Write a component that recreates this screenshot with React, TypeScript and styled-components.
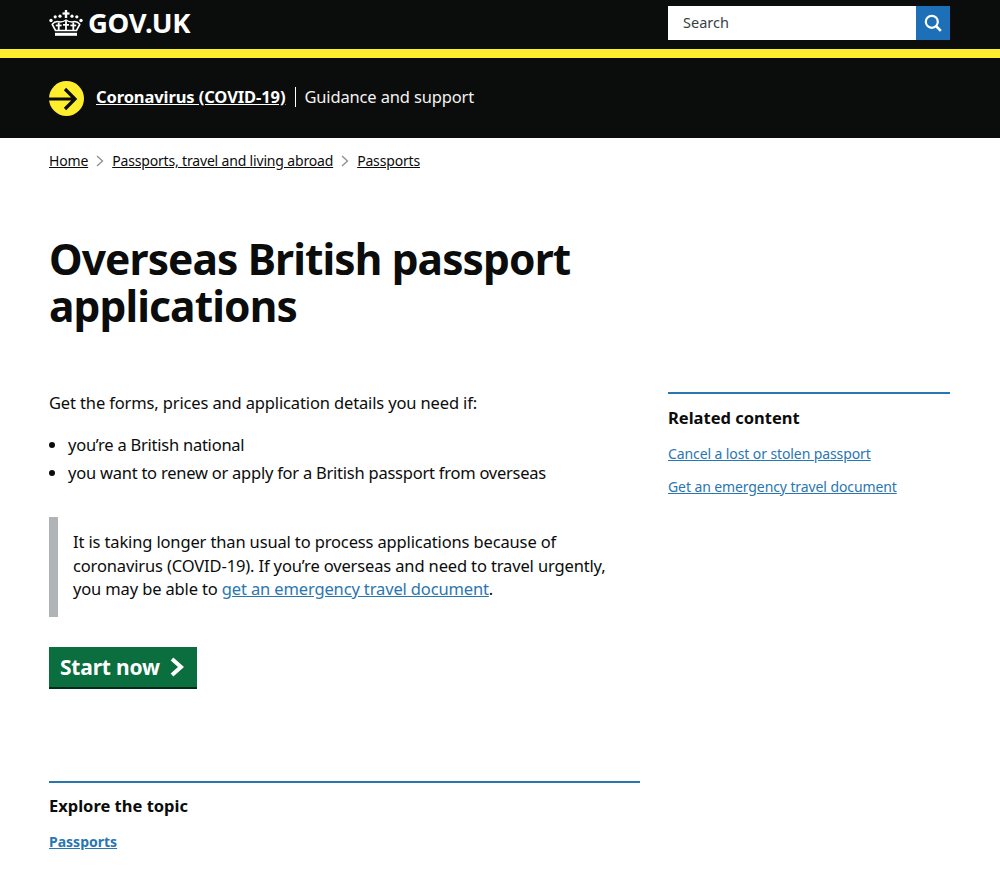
import React from "react";
import styled, { createGlobalStyle } from "styled-components";

const GlobalStyle = createGlobalStyle`
  html, body { margin: 0; padding: 0; background: #fff; }
  body {
    font-family: "Noto Sans", "Liberation Sans", Arial, sans-serif;
    color: #0b0c0c;
  }
  a { color: inherit; }
`;

const CrownIcon = () => (
  <svg width="34" height="26" viewBox="0 0 34 26" fill="#fff">
    {/* top cross */}
    <rect x="15.800" y="0" width="2.400" height="8" />
    <rect x="13.500" y="2.400" width="7" height="2.200" />
    {/* jewels */}
    <circle cx="11" cy="6.200" r="1.600" />
    <circle cx="23" cy="6.200" r="1.600" />
    <circle cx="6.200" cy="6.800" r="1.600" />
    <circle cx="27.800" cy="6.800" r="1.600" />
    <circle cx="2" cy="10.500" r="1.700" />
    <circle cx="32" cy="10.500" r="1.700" />
    {/* arches */}
    <path d="M3 14.500c2-2.500 5-3.500 8-2.500M31 14.500c-2-2.500-5-3.500-8-2.500M11 12c2 0 4-.5 6-2 2 1.500 4 2 6 2" fill="none" stroke="#fff" strokeWidth="1.400" />
    {/* inner crosses */}
    <rect x="8.800" y="12.500" width="1.800" height="7.500" />
    <rect x="16.100" y="11" width="1.800" height="9" />
    <rect x="23.400" y="12.500" width="1.800" height="7.500" />
    <rect x="6.800" y="14.600" width="5.800" height="1.700" />
    <rect x="14" y="14" width="6" height="1.700" />
    <rect x="21.400" y="14.600" width="5.800" height="1.700" />
    <path d="M3 14l3.500 6.500h21L31 14" fill="none" stroke="#fff" strokeWidth="1.600" />
    <rect x="6" y="22.800" width="22" height="3" />
  </svg>
);

const ArrowBadge = () => (
  <svg width="35" height="35" viewBox="0 0 35 35">
    <circle cx="17.500" cy="17.500" r="17.500" fill="#ffee2e" />
    <path d="M0 18h26M16 8l10 10-10 10" fill="none" stroke="#0b0c0c" strokeWidth="3.200" />
  </svg>
);

const SearchIcon = () => (
  <svg width="18" height="18" viewBox="0 0 18 18" fill="none" stroke="#fff">
    <circle cx="7.800" cy="7.800" r="6" strokeWidth="2.200" />
    <path d="M12 12l4.800 4.800" strokeWidth="2.600" />
  </svg>
);

const Chevron = () => (
  <BreadcrumbSeparator width="8" height="12" viewBox="0 0 8 12" fill="none" stroke="#8a8f92" strokeWidth="1.300">
    <path d="M1 1l5.500 5-5.500 5" />
  </BreadcrumbSeparator>
);

const App: React.FC = () => {
  return (
    <>
      <GlobalStyle />
      <TopBar>
        <Logo>
          <CrownIcon />
          <LogoText>GOV.UK</LogoText>
        </Logo>
        <SearchBox>
          <SearchField>Search</SearchField>
          <SearchButton aria-label="Search"><SearchIcon /></SearchButton>
        </SearchBox>
      </TopBar>
      <YellowStrip />
      <CovidBanner>
        <ArrowBadge />
        <CovidText>
          <CovidLink href="#">Coronavirus (COVID-19)</CovidLink>
          <CovidNote>Guidance and support</CovidNote>
        </CovidText>
      </CovidBanner>
      <Page>
        <Breadcrumbs>
          <CrumbLink href="#">Home</CrumbLink>
          <Chevron />
          <CrumbLink href="#">Passports, travel and living abroad</CrumbLink>
          <Chevron />
          <CrumbLink href="#">Passports</CrumbLink>
        </Breadcrumbs>
        <Title>Overseas British passport applications</Title>
        <Columns>
          <Main>
            <Lead>Get the forms, prices and application details you need if:</Lead>
            <Bullets>
              <Bullet>you’re a British national</Bullet>
              <Bullet>you want to renew or apply for a British passport from overseas</Bullet>
            </Bullets>
            <Inset>
              It is taking longer than usual to process applications because of coronavirus (COVID-19). If you’re overseas and need to travel urgently, you may be able to <BlueLink href="#">get an emergency travel document</BlueLink>.
            </Inset>
            <StartButton href="#">
              Start now
              <svg width="17" height="20" viewBox="0 0 17 20" fill="none" stroke="#fff" strokeWidth="4">
                <path d="M3 2l9 8-9 8" />
              </svg>
            </StartButton>
            <ExploreBlock>
              <SectionHeading>Explore the topic</SectionHeading>
              <TopicLink href="#">Passports</TopicLink>
            </ExploreBlock>
          </Main>
          <Sidebar>
            <SectionHeading>Related content</SectionHeading>
            <RelatedLink href="#">Cancel a lost or stolen passport</RelatedLink>
            <RelatedLink href="#">Get an emergency travel document</RelatedLink>
          </Sidebar>
        </Columns>
      </Page>
    </>
  );
};

export default App;

const TopBar = styled.header`
  height: 49px;
  background: #0b0c0c;
  padding: 0 50px 4px 49px;
  display: flex;
  align-items: center;
  justify-content: space-between;
  box-sizing: border-box;
`;

const Logo = styled.div`
  display: flex;
  align-items: center;
  gap: 5px;
  color: #fff;
`;

const LogoText = styled.span`
  font-size: 27.500px;
  font-weight: 700;
  line-height: 45px;
  letter-spacing: -0.3px;
`;

const SearchBox = styled.div`
  display: flex;
  width: 282px;
  height: 34px;
  margin-top: 1px;
`;

const SearchField = styled.div`
  flex: 1;
  background: #fff;
  padding-left: 15px;
  font-size: 14.500px;
  line-height: 33px;
  color: #383f43;
`;

const SearchButton = styled.button`
  width: 34px;
  height: 34px;
  padding: 0;
  border: 0;
  background: #1d70b8;
  display: flex;
  align-items: center;
  justify-content: center;
`;

const YellowStrip = styled.div`
  height: 9px;
  background: #ffee2e;
`;

const CovidBanner = styled.div`
  height: 80px;
  background: #0b0c0c;
  padding-left: 49px;
  display: flex;
  align-items: center;
  color: #fff;
  box-sizing: border-box;
`;

const CovidText = styled.div`
  display: flex;
  align-items: center;
  margin: -3px 0 0 12px;
`;

const CovidLink = styled.a`
  font-size: 16.500px;
  font-weight: 700;
  letter-spacing: -0.1px;
  color: #fff;
`;

const CovidNote = styled.span`
  margin-left: 10px;
  padding-left: 8px;
  border-left: 1px solid #fff;
  font-size: 16.500px;
  line-height: 20px;
  letter-spacing: -0.15px;
  color: #f3f2f1;
`;

const Page = styled.main`
  padding: 0 50px 0 49px;
`;

const Breadcrumbs = styled.nav`
  height: 45px;
  display: flex;
  align-items: center;
  font-size: 14px;
  letter-spacing: -0.17px;
`;

const CrumbLink = styled.a`
  color: #0b0c0c;
`;

const BreadcrumbSeparator = styled.svg`
  margin: 0 8px;
`;

const Title = styled.h1`
  width: 591px;
  margin: 52px 0 0;
  font-size: 42.500px;
  line-height: 47px;
  font-weight: 700;
  letter-spacing: -0.9px;
`;

const Columns = styled.div`
  display: grid;
  grid-template-columns: 591px 282px;
  column-gap: 28px;
  margin-top: 62px;
`;

const Main = styled.div``;

const Lead = styled.p`
  margin: 0;
  font-size: 16.500px;
  line-height: 24px;
  letter-spacing: -0.14px;
`;

const Bullets = styled.ul`
  margin: 18px 0 0;
  padding: 0 0 0 19px;
  font-size: 16.500px;
  line-height: 24px;
  letter-spacing: -0.24px;
`;

const Bullet = styled.li`
  margin-bottom: 4px;
`;

const Inset = styled.div`
  margin-top: 32px;
  height: 100px;
  box-sizing: border-box;
  padding: 13px 20px 0 15px;
  border-left: 9px solid #b1b4b6;
  font-size: 16.500px;
  line-height: 23.500px;
  letter-spacing: -0.14px;
`;

const BlueLink = styled.a`
  color: #2a76b0;
`;

const StartButton = styled.a`
  margin-top: 30px;
  width: 148px;
  height: 42px;
  box-sizing: border-box;
  padding-left: 11px;
  display: flex;
  align-items: center;
  gap: 9px;
  background: #0b6e3f;
  border-bottom: 2px solid #002d18;
  color: #fff;
  font-size: 21px;
  font-weight: 700;
  letter-spacing: -0.2px;
  text-decoration: none;
`;

const ExploreBlock = styled.section`
  margin-top: 92px;
  border-top: 2px solid #2a76b0;
  padding-top: 12px;
`;

const SectionHeading = styled.h2`
  margin: 0;
  padding-bottom: 1px;
  font-size: 16.500px;
  line-height: 22px;
  font-weight: 700;
`;

const TopicLink = styled.a`
  display: block;
  margin-top: 14px;
  font-size: 14px;
  font-weight: 700;
  color: #2a76b0;
`;

const Sidebar = styled.aside`
  margin-top: 1px;
  border-top: 2px solid #2a76b0;
  padding-top: 13px;
  align-self: start;
`;

const RelatedLink = styled.a`
  display: block;
  margin-top: 14px;
  font-size: 14px;
  line-height: 19px;
  letter-spacing: -0.1px;
  color: #2a76b0;
`;
